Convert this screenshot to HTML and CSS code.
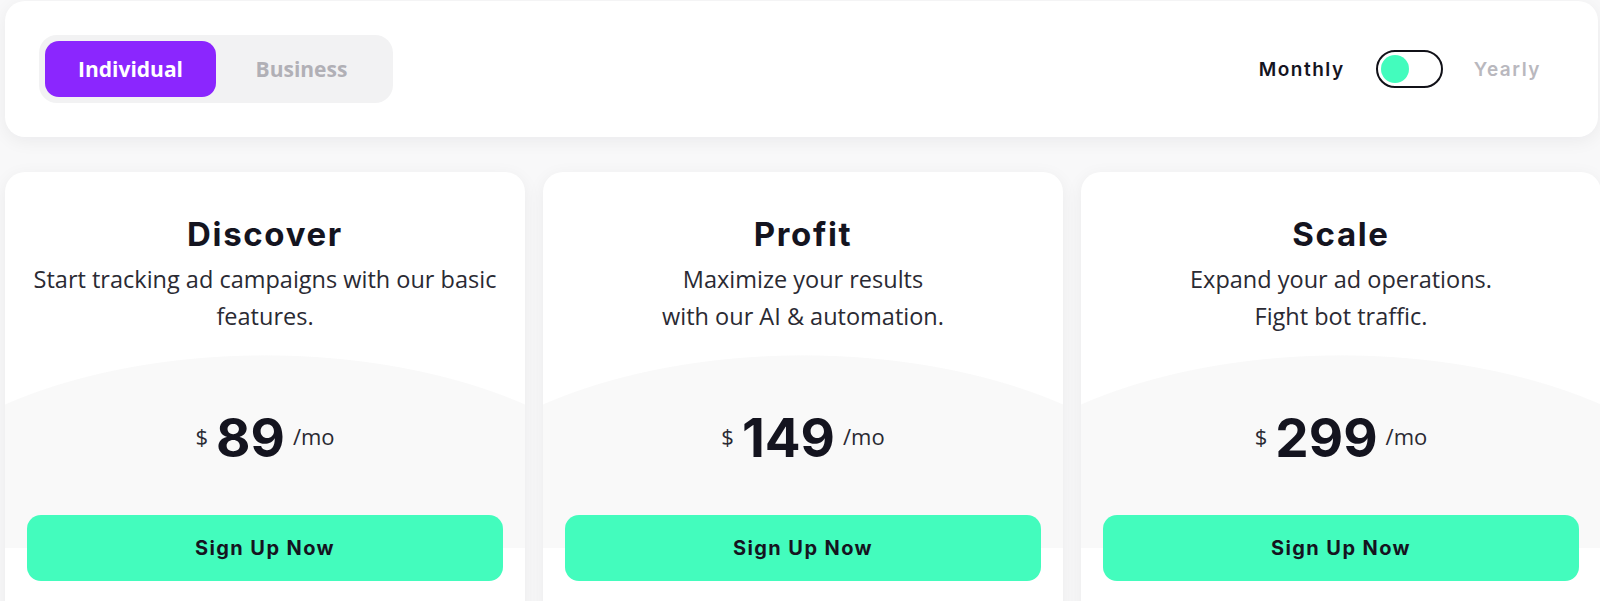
FILE: index.html
```html
<!DOCTYPE html>
<html lang="en">
<head>
<meta charset="utf-8">
<title>Pricing</title>
<link rel="stylesheet" href="styles.css">
</head>
<body>
<div class="page">
  <header class="panel">
    <div class="segmented">
      <button class="seg seg-active">Individual</button>
      <button class="seg">Business</button>
    </div>
    <div class="billing">
      <span class="bill bill-active">Monthly</span>
      <span class="toggle"><span class="knob"></span></span>
      <span class="bill bill-muted">Yearly</span>
    </div>
  </header>

  <main class="cards">
    <section class="card">
      <h2 class="title">Discover</h2>
      <p class="desc">Start tracking ad campaigns with our basic features.</p>
      <div class="pricebox">
        <div class="price"><span class="cur">$</span><span class="amount">89</span><span class="per">/mo</span></div>
        <button class="cta">Sign Up Now</button>
      </div>
    </section>
    <section class="card">
      <h2 class="title">Profit</h2>
      <p class="desc">Maximize your results<br>with our AI &amp; automation.</p>
      <div class="pricebox">
        <div class="price"><span class="cur">$</span><span class="amount">149</span><span class="per">/mo</span></div>
        <button class="cta">Sign Up Now</button>
      </div>
    </section>
    <section class="card">
      <h2 class="title">Scale</h2>
      <p class="desc">Expand your ad operations.<br>Fight bot traffic.</p>
      <div class="pricebox">
        <div class="price"><span class="cur">$</span><span class="amount">299</span><span class="per">/mo</span></div>
        <button class="cta">Sign Up Now</button>
      </div>
    </section>
  </main>
</div>
</body>
</html>
```

FILE: styles.css
```css
* { box-sizing: border-box; }

html, body {
  margin: 0;
  padding: 0;
  background: #f8f8f9;
  overflow: hidden;
}

body {
  font-family: "Open Sans", "Noto Sans", sans-serif;
  color: #2a2a33;
}

.page {
  width: 1596px;
  padding: 1px 0 0 5px;
  box-sizing: content-box;
}

/* ---------- top panel ---------- */
.panel {
  height: 136px;
  margin-right: 3px;
  background: #ffffff;
  border-radius: 20px;
  box-shadow: 0 4px 18px rgba(20, 20, 40, 0.06);
  display: flex;
  align-items: center;
  justify-content: space-between;
  padding: 0 57px 0 34px;
}

.segmented {
  display: flex;
  background: #f2f2f3;
  border-radius: 18px;
  padding: 6px;
  height: 68px;
}

.seg {
  width: 171px;
  height: 56px;
  border: 0;
  border-radius: 14px;
  background: transparent;
  font-family: "Open Sans", sans-serif;
  font-weight: 700;
  font-size: 21px;
  color: #b1b0b6;
  cursor: pointer;
}

.seg-active {
  background: #8b26fe;
  color: #ffffff;
}

.billing {
  display: flex;
  align-items: center;
  gap: 31px;
}

.bill {
  font-family: "Inter", sans-serif;
  font-weight: 600;
  font-size: 19px;
  letter-spacing: 0.08em;
}

.bill-active { color: #15141f; }
.bill-muted { color: #b9b8be; }

.toggle {
  width: 67px;
  height: 38px;
  border: 2.5px solid #111118;
  border-radius: 19px;
  display: flex;
  align-items: center;
  padding: 0 3.5px;
  background: #ffffff;
}

.knob {
  width: 28px;
  height: 28px;
  border-radius: 50%;
  background: #43fcbd;
}

/* ---------- cards ---------- */
.cards {
  margin-top: 35px;
  display: grid;
  grid-template-columns: repeat(3, 520px);
  gap: 18px;
}

.card {
  background: #ffffff;
  border-radius: 20px;
  box-shadow: 0 4px 18px rgba(20, 20, 40, 0.06);
  padding: 42px 22px 60px;
  text-align: center;
  overflow: hidden;
}

.title {
  margin: 0;
  font-family: "Inter", sans-serif;
  font-weight: 700;
  font-size: 33px;
  line-height: 40px;
  letter-spacing: 0.05em;
  color: #14141f;
}

.desc {
  margin: 7px 0 0;
  height: 74px;
  font-size: 23.5px;
  line-height: 37px;
  color: #2a2a33;
}

.pricebox {
  margin: 20px -22px 0;
  padding: 53px 22px 0;
  background-image: radial-gradient(400px 204px at 50% 204px, #f9f9f9 99.6%, rgba(249, 249, 249, 0) 100%);
  background-size: 100% 193px;
  background-repeat: no-repeat;
}

.price {
  display: flex;
  justify-content: center;
  align-items: center;
  gap: 8px;
  height: 60px;
}

.cur {
  font-size: 22px;
  line-height: 22px;
  margin-bottom: 4px;
  color: #2a2a33;
}

.amount {
  font-family: "Inter", sans-serif;
  font-weight: 700;
  font-size: 53px;
  line-height: 60px;
  color: #14141f;
}

.per {
  font-size: 22px;
  line-height: 22px;
  margin-bottom: 4px;
  color: #2a2a33;
}

.cta {
  display: block;
  width: 100%;
  height: 66px;
  margin-top: 47px;
  border: 0;
  border-radius: 14px;
  background: #43fcbd;
  font-family: "Inter", sans-serif;
  font-weight: 700;
  font-size: 20px;
  letter-spacing: 0.07em;
  color: #15141f;
  cursor: pointer;
}
```
